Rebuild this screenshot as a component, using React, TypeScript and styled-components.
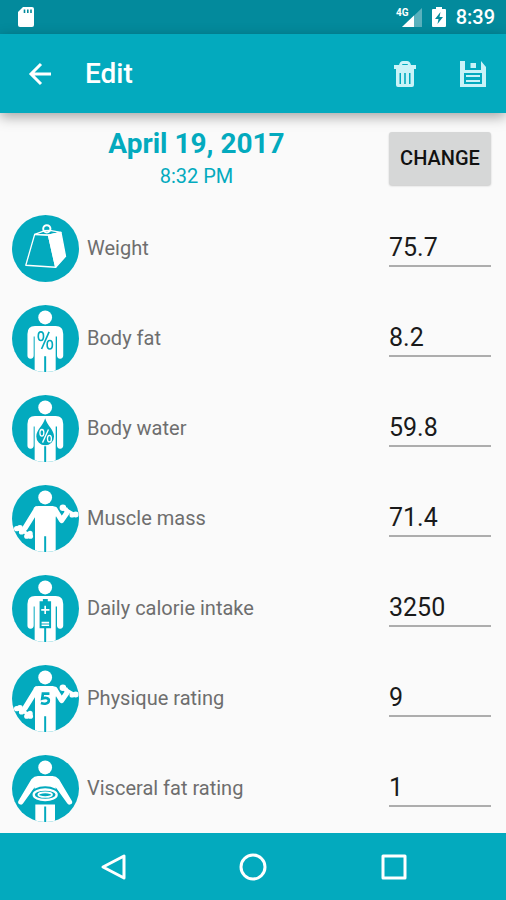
import React, { useState } from "react";
import styled, { createGlobalStyle } from "styled-components";

const TEAL = "#03aabe";
const TEAL_DARK = "#038a9c";
const SURFACE = "#fafafa";

const GlobalStyle = createGlobalStyle`
  * { box-sizing: border-box; }
  body {
    margin: 0;
    background: ${SURFACE};
    font-family: Roboto, "Noto Sans", sans-serif;
  }
`;

const Screen = styled.div`
  display: flex;
  flex-direction: column;
  min-height: 100vh;
  background: ${SURFACE};
`;

const StatusBar = styled.div`
  display: flex;
  align-items: center;
  justify-content: space-between;
  height: 34px;
  padding: 0 11px 0 17px;
  background: ${TEAL_DARK};
  color: #fff;
`;

const StatusGroup = styled.div`
  display: flex;
  align-items: center;
  gap: 9px;
`;

const Clock = styled.time`
  font-size: 20px;
  line-height: 24px;
  font-weight: 500;
`;

const AppBar = styled.header`
  display: flex;
  align-items: center;
  height: 79px;
  padding: 0 17px 0 24px;
  background: ${TEAL};
  color: #fff;
  box-shadow: 0 4px 12px rgba(0, 0, 0, 0.34);
  z-index: 1;
`;

const Title = styled.h1`
  flex: 1;
  margin: 0 0 0 29px;
  font-size: 28px;
  line-height: 36px;
  font-weight: 500;
`;

const Actions = styled.div`
  display: flex;
  gap: 36px;
`;

const IconButton = styled.button`
  display: flex;
  align-items: center;
  justify-content: center;
  min-width: 32px;
  height: 48px;
  padding: 0;
  border: 0;
  background: none;
  color: inherit;
  cursor: pointer;
`;

const Form = styled.main`
  flex: 1;
`;

const Line = styled.div`
  display: grid;
  grid-template-columns: 67px 1fr 102px;
  align-items: center;
  gap: 8px;
  height: 90px;
  padding: 0 15px 0 12px;
`;

const DateBlock = styled.div`
  grid-column: 1 / 3;
  display: flex;
  flex-direction: column;
  align-items: center;
  color: ${TEAL};
`;

const DateText = styled.div`
  font-size: 28px;
  line-height: 36px;
  font-weight: 700;
`;

const TimeText = styled.div`
  font-size: 20px;
  line-height: 28px;
`;

const ChangeButton = styled.button`
  height: 53px;
  padding: 0;
  border: 0;
  border-radius: 3px;
  background: #d6d7d7;
  color: #111;
  box-shadow: 0 1px 2px rgba(0, 0, 0, 0.2);
  font: 500 20px/24px Roboto, sans-serif;
  text-transform: uppercase;
  cursor: pointer;
`;

const FieldLabel = styled.label`
  color: #6e6e6e;
  font-size: 20px;
  line-height: 28px;
`;

const FieldInput = styled.input`
  width: 100%;
  height: 38px;
  padding: 0;
  border: 0;
  border-bottom: 2px solid #adadad;
  border-radius: 0;
  outline: 0;
  background: none;
  color: #1a1a1a;
  font: 400 25px/36px Roboto, sans-serif;
  &:focus {
    border-bottom-color: ${TEAL};
  }
`;

const Badge = styled.svg`
  display: block;
  width: 100%;
  height: auto;
`;

const NavBar = styled.nav`
  display: flex;
  justify-content: center;
  align-items: center;
  gap: 108px;
  height: 67px;
  background: ${TEAL};
  color: #fff;
`;

const Head = () => <circle cx="101" cy="38" r="21" />;

const Standing = () => (
  <g fill="#fff">
    <Head />
    <path d="M47 88Q47 64 70 64H133Q156 64 156 88V154A9 9 0 0 1 137 154V96H133V210H104V156H98V210H69V96H66V154A9 9 0 0 1 47 154Z" />
  </g>
);

const Lifting = () => (
  <g fill="#fff" stroke="#fff" strokeLinecap="round" strokeLinejoin="round">
    <g stroke="none">
      <Head />
      <path d="M66 70Q72 64 80 64H124Q132 64 138 72L133 100V210H104V156H98V210H70V92Z" />
      <circle cx="14" cy="133" r="8" />
      <circle cx="24" cy="131" r="9" />
      <circle cx="29" cy="143" r="8" />
      <circle cx="45" cy="156" r="8" />
      <circle cx="55" cy="147" r="8" />
      <circle cx="56" cy="156" r="8" />
      <circle cx="155" cy="69" r="10" />
      <circle cx="164" cy="75" r="7" />
      <circle cx="183" cy="91" r="8" />
      <circle cx="194" cy="90" r="9" />
    </g>
    <path d="M75 74L39 132" fill="none" strokeWidth="17" />
    <path d="M131 75L151 108L169 82" fill="none" strokeWidth="16" />
    <path d="M17 132L56 153" strokeWidth="10" />
    <path d="M155 69L192 90" strokeWidth="8" />
  </g>
);

const figures: Record<string, React.ReactNode> = {
  weight: (
    <g stroke="#fff" strokeWidth="4" strokeLinejoin="round" fill="none">
      <circle cx="106" cy="42" r="11" strokeWidth="6" />
      <path d="M69 59L98 48L115 47L149 53L111 61Z" />
      <path d="M69 59L42 153L133 159L111 61Z" />
      <path d="M111 61L149 53L163 126L133 159Z" fill="#fff" />
    </g>
  ),
  fat: (
    <>
      <Standing />
      <g fill="none" stroke={TEAL} strokeWidth="5">
        <ellipse cx="88" cy="95" rx="8" ry="13" />
        <ellipse cx="115" cy="121" rx="8" ry="13" />
        <path d="M113 82L90 134" />
      </g>
    </>
  ),
  water: (
    <>
      <Standing />
      <path d="M101 71C108 94 128 107 128 126A27 27 0 0 1 74 126C74 107 94 94 101 71Z" fill={TEAL} />
      <g fill="none" stroke="#fff" strokeWidth="4">
        <ellipse cx="91" cy="115" rx="6" ry="10" />
        <ellipse cx="114" cy="133" rx="6" ry="10" />
        <path d="M111 105L93 145" />
      </g>
    </>
  ),
  muscle: <Lifting />,
  calories: (
    <>
      <Standing />
      <path d="M94 73H109V80H119V162H84V80H94Z" fill={TEAL} />
      <path d="M101 94V119M89 106H114M90 145H113M90 153H113" stroke="#fff" strokeWidth="5" />
    </>
  ),
  physique: (
    <>
      <Lifting />
      <path d="M114 87H94L92 102C105 97 113 103 112 109C111 118 99 120 88 116" fill="none" stroke={TEAL} strokeWidth="8" />
    </>
  ),
  visceral: (
    <>
      <g fill="#fff">
        <Head />
        <path d="M59 74Q68 64 79 64H123Q134 64 143 74L182 139A8 8 0 0 1 168 147L133 98V128H69V98L34 147A8 8 0 0 1 20 139Z" />
        <path d="M71 151H131V210H104V157H98V210H71Z" />
      </g>
      <ellipse cx="101" cy="120" rx="43" ry="25" fill={TEAL} />
      <g fill="none" stroke="#fff">
        <ellipse cx="101" cy="121" rx="35" ry="16" strokeWidth="7" />
        <ellipse cx="101" cy="121" rx="21" ry="7" strokeWidth="5" />
      </g>
    </>
  ),
};

const FigureBadge = ({ kind }: { kind: string }) => (
  <Badge viewBox="0 0 204 204" aria-hidden="true">
    <defs>
      <clipPath id={`disc-${kind}`}>
        <circle cx="102" cy="102" r="102" />
      </clipPath>
    </defs>
    <g clipPath={`url(#disc-${kind})`}>
      <rect width="204" height="204" fill={TEAL} />
      {figures[kind]}
    </g>
  </Badge>
);

const measures = [
  { kind: "weight", label: "Weight", value: "75.7" },
  { kind: "fat", label: "Body fat", value: "8.2" },
  { kind: "water", label: "Body water", value: "59.8" },
  { kind: "muscle", label: "Muscle mass", value: "71.4" },
  { kind: "calories", label: "Daily calorie intake", value: "3250" },
  { kind: "physique", label: "Physique rating", value: "9" },
  { kind: "visceral", label: "Visceral fat rating", value: "1" },
];

const MeasureRow = ({ kind, label, value }: (typeof measures)[number]) => {
  const [current, setCurrent] = useState(value);
  return (
    <Line>
      <FigureBadge kind={kind} />
      <FieldLabel htmlFor={kind}>{label}</FieldLabel>
      <FieldInput id={kind} inputMode="decimal" value={current} onChange={(e) => setCurrent(e.target.value)} />
    </Line>
  );
};

export default function App() {
  return (
    <Screen>
      <GlobalStyle />
      <StatusBar>
        <svg width="18" height="22" viewBox="0 0 18 22" aria-hidden="true">
          <path d="M6 1H15Q17 1 17 3V19Q17 21 15 21H3Q1 21 1 19V6Z" fill="#fff" />
          <path d="M7.5 3.5V7M10.8 3.5V7M14 3.5V7" stroke={TEAL_DARK} strokeWidth="1.6" />
        </svg>
        <StatusGroup>
          <svg width="28" height="22" viewBox="0 0 28 22" aria-hidden="true">
            <path d="M28 2V21H8Z" fill="#5ab1bd" />
            <path d="M20 9.500V21H8Z" fill="#fff" />
            <text x="2" y="10" fill="#fff" fontFamily="Roboto, sans-serif" fontSize="10" fontWeight="700">4G</text>
          </svg>
          <svg width="16" height="22" viewBox="0 0 16 22" aria-hidden="true">
            <path d="M5 1H11V3H14Q15 3 15 4V20Q15 21 14 21H2Q1 21 1 20V4Q1 3 2 3H5Z" fill="#fff" />
            <path d="M9.500 6L4 13H7.500L6.500 18L12 11H8.500Z" fill={TEAL_DARK} />
          </svg>
          <Clock>8:39</Clock>
        </StatusGroup>
      </StatusBar>
      <AppBar>
        <IconButton aria-label="Back">
          <svg width="24" height="24" viewBox="0 0 24 24" fill="none" stroke="#fff" strokeWidth="3">
            <path d="M23 12H3M13 2L3 12L13 22" />
          </svg>
        </IconButton>
        <Title>Edit</Title>
        <Actions>
          <IconButton aria-label="Delete">
            <svg width="24" height="28" viewBox="0 0 24 28" fill="#c9f3f8">
              <path d="M1 5H6Q7 1 10 1H14Q17 1 18 5H23V9H1ZM9 5H15Q15 4 14 4H10Q9 4 9 5Z" fillRule="evenodd" />
              <path d="M3 9H21V25Q21 27 19 27H5Q3 27 3 25ZM6.500 13V24H8V13ZM11.200 13V24H12.800V13ZM16 13V24H17.500V13Z" fillRule="evenodd" />
            </svg>
          </IconButton>
          <IconButton aria-label="Save">
            <svg width="28" height="28" viewBox="0 0 28 28" fill="#c9f3f8">
              <path d="M1 1H6V10H22V1L27 7V27H1ZM5 13V24H23V13Z" fillRule="evenodd" />
              <path d="M11.500 3H17V8H11.500ZM7 15H21V17H7ZM7 20H21V22H7Z" />
            </svg>
          </IconButton>
        </Actions>
      </AppBar>
      <Form>
        <Line>
          <DateBlock>
            <DateText>April 19, 2017</DateText>
            <TimeText>8:32 PM</TimeText>
          </DateBlock>
          <ChangeButton type="button">Change</ChangeButton>
        </Line>
        {measures.map((m) => (
          <MeasureRow key={m.kind} {...m} />
        ))}
      </Form>
      <NavBar>
        <IconButton aria-label="Navigate back">
          <svg width="28" height="28" viewBox="0 0 28 28" fill="none" stroke="#fff" strokeWidth="3" strokeLinejoin="round">
            <path d="M25 3V25L4 14Z" />
          </svg>
        </IconButton>
        <IconButton aria-label="Home">
          <svg width="28" height="28" viewBox="0 0 28 28" fill="none" stroke="#fff" strokeWidth="3">
            <circle cx="14" cy="14" r="12" />
          </svg>
        </IconButton>
        <IconButton aria-label="Recent apps">
          <svg width="28" height="28" viewBox="0 0 28 28" fill="none" stroke="#fff" strokeWidth="3" strokeLinejoin="round">
            <rect x="4" y="3" width="22" height="22" />
          </svg>
        </IconButton>
      </NavBar>
    </Screen>
  );
}
